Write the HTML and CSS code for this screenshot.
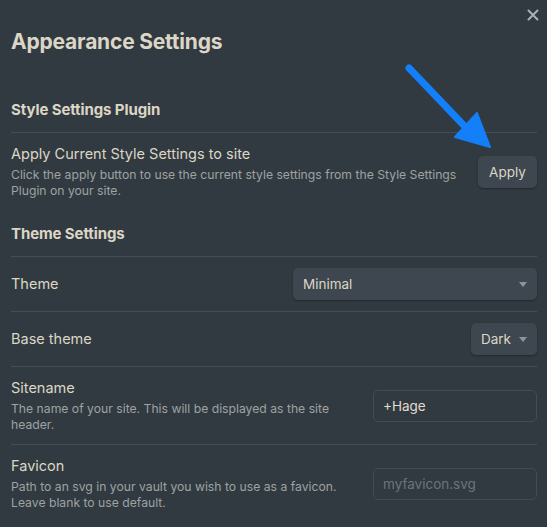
FILE: index.html
```html
<!DOCTYPE html>
<html lang="en">
<head>
<meta charset="utf-8">
<title>Appearance Settings</title>
<link rel="stylesheet" href="styles.css">
</head>
<body>
<div class="modal">
  <button class="close" aria-label="Close">
    <svg width="12" height="12" viewBox="0 0 12 12"><path d="M1.5 1.5 L10.5 10.5 M10.5 1.5 L1.5 10.5" stroke="#aab0b4" stroke-width="2" stroke-linecap="round"/></svg>
  </button>
  <h1 class="title">Appearance Settings</h1>

  <div class="heading first">Style Settings Plugin</div>
  <div class="item">
    <div class="info">
      <div class="name">Apply Current Style Settings to site</div>
      <div class="desc">Click the apply button to use the current style settings from the Style Settings Plugin on your site.</div>
    </div>
    <div class="control"><button class="btn">Apply</button></div>
  </div>

  <div class="heading">Theme Settings</div>
  <div class="item">
    <div class="info"><div class="name">Theme</div></div>
    <div class="control"><div class="select wide"><span>Minimal</span><i class="caret"></i></div></div>
  </div>
  <div class="item">
    <div class="info"><div class="name">Base theme</div></div>
    <div class="control"><div class="select"><span>Dark</span><i class="caret"></i></div></div>
  </div>
  <div class="item">
    <div class="info">
      <div class="name">Sitename</div>
      <div class="desc">The name of your site. This will be displayed as the site header.</div>
    </div>
    <div class="control"><div class="input">+Hage</div></div>
  </div>
  <div class="item">
    <div class="info">
      <div class="name">Favicon</div>
      <div class="desc">Path to an svg in your vault you wish to use as a favicon. Leave blank to use default.</div>
    </div>
    <div class="control"><div class="input placeholder">myfavicon.svg</div></div>
  </div>

  <svg class="arrow" width="120" height="110" viewBox="0 0 120 110">
    <line x1="9" y1="8" x2="73" y2="75" stroke="#137ff8" stroke-width="7" stroke-linecap="round"/>
    <polygon points="90,87 55,77 77,53" fill="#137ff8" stroke="#137ff8" stroke-width="2" stroke-linejoin="round"/>
  </svg>
</div>
</body>
</html>
```

FILE: styles.css
```css
html, body {
  margin: 0;
  padding: 0;
  background: #323a41;
}
body {
  font-family: Inter, "Noto Sans", sans-serif;
  color: #dbd6c6;
}
.modal {
  position: relative;
  padding: 28px 10px 0 11px;
  min-height: 499px;
}
.close {
  position: absolute;
  top: 9px;
  right: 8px;
  width: 12px;
  height: 12px;
  padding: 0;
  border: 0;
  background: none;
  display: flex;
}
.title {
  margin: 0 0 31px;
  font-size: 21px;
  line-height: 28px;
  font-weight: 700;
  letter-spacing: -0.2px;
}
.heading {
  font-size: 15px;
  line-height: 20px;
  font-weight: 700;
  padding: 14px 0 12px;
  letter-spacing: -0.1px;
}
.heading.first {
  padding-top: 13px;
}
.item {
  display: flex;
  align-items: center;
  border-top: 1px solid #454d55;
  padding: 11px 0 11px;
}
.info {
  flex: 1 1 0;
  margin-right: 16px;
}
.name {
  font-size: 14.5px;
  line-height: 20px;
}
.desc {
  margin-top: 3px;
  font-size: 12.2px;
  line-height: 16px;
  color: #9ea2a2;
}
.control {
  flex: none;
  display: flex;
  justify-content: flex-end;
}
.btn {
  font-family: inherit;
  font-size: 13.5px;
  color: #dbd6c6;
  background: #3e474f;
  border: 0;
  border-radius: 5px;
  height: 32px;
  width: 59px;
  padding: 0;
  box-shadow: 0 1px 2px rgba(0, 0, 0, 0.35);
}
.select {
  display: flex;
  align-items: center;
  justify-content: space-between;
  height: 32px;
  box-sizing: border-box;
  padding: 0 10px;
  background: #3e474f;
  border-radius: 5px;
  font-size: 13.5px;
  box-shadow: 0 1px 2px rgba(0, 0, 0, 0.35);
  width: 66px;
}
.select.wide {
  width: 244px;
}
.caret {
  width: 0;
  height: 0;
  border-left: 4px solid transparent;
  border-right: 4px solid transparent;
  border-top: 5px solid #8d959b;
  margin-left: 8px;
}
.input {
  width: 164px;
  height: 32px;
  box-sizing: border-box;
  border: 1px solid #434b53;
  border-radius: 5px;
  padding: 0 9px;
  display: flex;
  align-items: center;
  font-size: 13.5px;
  color: #e0dccf;
  background: #323a41;
}
.input.placeholder {
  color: #6d7478;
}
.arrow {
  position: absolute;
  left: 400px;
  top: 60px;
}
```
